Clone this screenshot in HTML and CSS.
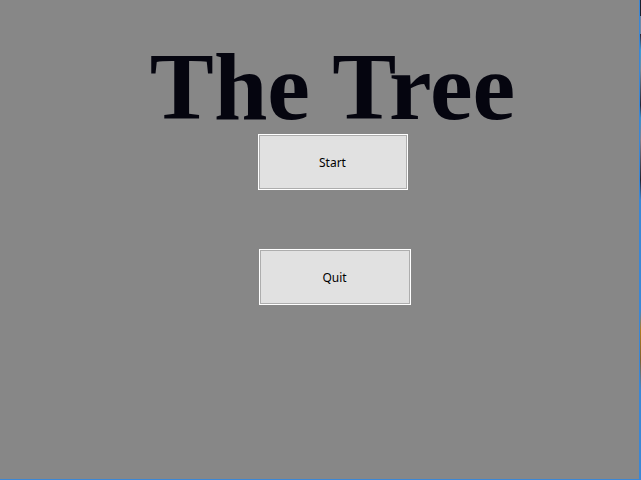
FILE: index.html
```html
<!DOCTYPE html>
<html lang="en">
<head>
<meta charset="utf-8">
<title>The Tree</title>
<link rel="stylesheet" href="styles.css">
</head>
<body>
<div class="window">
  <div class="screen">
    <main class="menu">
      <h1 class="title">The Tree</h1>
      <button class="btn btn-start" type="button">Start</button>
      <button class="btn btn-quit" type="button">Quit</button>
    </main>
  </div>
  <div class="edge"></div>
</div>
</body>
</html>
```
FILE: styles.css
```css
html, body {
  margin: 0;
  padding: 0;
  background: #878787;
}
.window {
  display: flex;
  width: 641px;
  height: 480px;
  overflow: hidden;
}
.screen {
  width: 639px;
  height: 479px;
  background: #878787;
  border-right: 1px solid #3a87d6;
  border-bottom: 1px solid #3a87d6;
}
.edge {
  width: 1px;
  height: 480px;
  background: linear-gradient(to bottom,
    #1a2030 0, #1a2030 16px, #6d88a8 16px, #6d88a8 34px,
    #2a1f30 34px, #3d9ad8 50px, #6f8aa0 70px, #202438 105px,
    #3a90d0 118px, #7f8090 140px, #1e2232 180px, #3a87d6 200px,
    #3a87d6 310px, #b07a20 330px, #806030 360px, #3a87d6 390px,
    #3a87d6 480px);
}
.menu {
  display: flex;
  flex-direction: column;
  align-items: center;
  padding-left: 26px;
}
.title {
  margin: 0;
  padding-top: 42px;
  font-family: "Liberation Serif", "Times New Roman", serif;
  font-weight: bold;
  font-size: 96px;
  line-height: 90px;
  color: #05050f;
}
.btn {
  box-sizing: border-box;
  height: 54px;
  border: 1px solid #adadad;
  box-shadow: 0 0 0 1px #ffffff;
  background: #e1e1e1;
  color: #000000;
  font-family: "Noto Sans", "Open Sans", sans-serif;
  font-size: 12px;
  padding: 0;
}
.btn-start {
  width: 148px;
  margin-top: 3px;
}
.btn-quit {
  width: 150px;
  margin-top: 61px;
  margin-left: 4px;
}
```
